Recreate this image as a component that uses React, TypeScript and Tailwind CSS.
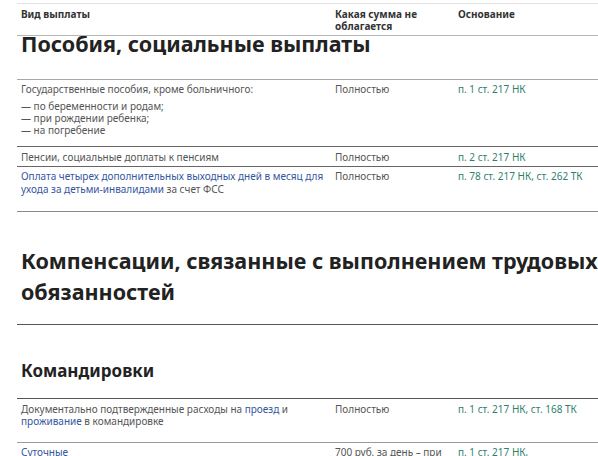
const cols = "grid grid-cols-[314px_123px_1fr]";

function Ref({ children }: { children: React.ReactNode }) {
  return <span className="text-[#2f7f6f]">{children}</span>;
}

function Link({ children }: { children: React.ReactNode }) {
  return <span className="text-[#3556a0]">{children}</span>;
}

export default function App() {
  return (
    <div className="w-[598px] h-[456px] overflow-hidden bg-white font-['Noto_Sans',sans-serif] text-[10px] text-[#555]">
      <div className="pl-[17px]">
        {/* header row, stays on top of the section title */}
        <div className={`${cols} sticky top-0 z-10 mt-[3px] bg-white border-t border-b border-t-[#e2e2e2] border-b-[#b5b5b5] pt-[4px] pb-[3px] font-bold text-[#333] leading-[12px]`}>
          <div className="px-1">Вид выплаты</div>
          <div className="px-1">
            Какая сумма не
            <br />
            облагается
          </div>
          <div className="px-1">Основание</div>
        </div>

        <h2 className="-mt-[8px] px-1 pb-[20px] text-[21.5px] leading-[31px] font-bold text-[#222] whitespace-nowrap border-b border-[#a8a8a8]">
          Пособия, социальные выплаты
        </h2>

        <div className={`${cols} pt-[3px] pb-[10px] leading-[12px] border-b border-[#666]`}>
          <div className="px-1">
            <p className="mb-[5px]">Государственные пособия, кроме больничного:</p>
            <p>— по беременности и родам;</p>
            <p>— при рождении ребенка;</p>
            <p>— на погребение</p>
          </div>
          <div className="px-1">Полностью</div>
          <div className="px-1">
            <Ref>п. 1 ст. 217 НК</Ref>
          </div>
        </div>

        <div className={`${cols} pt-[4px] pb-[3px] leading-[12px] border-b border-[#666]`}>
          <div className="px-1">Пенсии, социальные доплаты к пенсиям</div>
          <div className="px-1">Полностью</div>
          <div className="px-1">
            <Ref>п. 2 ст. 217 НК</Ref>
          </div>
        </div>

        <div className={`${cols} pt-[3px] pb-[15px] leading-[13px] border-b border-[#8a8a8a]`}>
          <div className="px-1">
            <Link>
              Оплата четырех дополнительных выходных дней в месяц для
              <br />
              ухода за детьми-инвалидами
            </Link>{" "}
            за счет ФСС
          </div>
          <div className="px-1">Полностью</div>
          <div className="px-1">
            <Ref>п. 78 ст. 217 НК, ст. 262 ТК</Ref>
          </div>
        </div>

        <h2 className="mt-[33px] px-1 pb-[17px] text-[21.5px] leading-[31px] font-bold text-[#222] whitespace-nowrap border-b border-[#555]">
          Компенсации, связанные с выполнением трудовых
          <br />
          обязанностей
        </h2>

        <h3 className="mt-[34px] px-1 pb-[15px] text-[17px] leading-[24px] font-bold text-[#222] border-b border-[#555]">
          Командировки
        </h3>

        <div className={`${cols} pt-[4px] pb-[15px] leading-[12px] border-b border-[#9a9a9a]`}>
          <div className="px-1">
            Документально подтвержденные расходы на <Link>проезд</Link> и
            <br />
            <Link>проживание</Link> в командировке
          </div>
          <div className="px-1">Полностью</div>
          <div className="px-1">
            <Ref>п. 1 ст. 217 НК, ст. 168 ТК</Ref>
          </div>
        </div>

        <div className={`${cols} pt-[3px] leading-[12px]`}>
          <div className="px-1">
            <Link>Суточные</Link>
          </div>
          <div className="px-1">700 руб. за день – при</div>
          <div className="px-1">
            <Ref>п. 1 ст. 217 НК,</Ref>
          </div>
        </div>
      </div>
    </div>
  );
}
